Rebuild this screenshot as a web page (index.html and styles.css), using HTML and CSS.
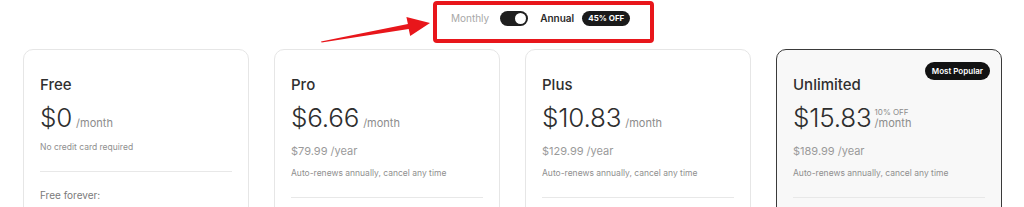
FILE: index.html
```html
<!DOCTYPE html>
<html lang="en">
<head>
<meta charset="utf-8">
<link rel="stylesheet" href="styles.css">
</head>
<body>
<div class="page">
  <header class="billing">
    <div class="toggle-box">
      <span class="opt opt-off">Monthly</span>
      <span class="switch"><span class="knob"></span></span>
      <span class="opt opt-on">Annual</span>
      <span class="save">45% OFF</span>
    </div>
  </header>
  <svg class="arrow" width="130" height="45" viewBox="0 0 130 45" aria-hidden="true">
    <polygon points="11,36.5 97.9,18.9 96.4,12 120,18 100.2,31 98.7,23.9 11.6,37.5" fill="#e8161b"/>
  </svg>

  <section class="plans">
    <article class="card">
      <h3 class="name">Free</h3>
      <div class="price"><span class="amount">$0</span><span class="per">/month</span></div>
      <p class="note note-first">No credit card required</p>
      <hr class="rule">
      <p class="feat-head">Free forever:</p>
    </article>

    <article class="card">
      <h3 class="name">Pro</h3>
      <div class="price"><span class="amount">$6.66</span><span class="per">/month</span></div>
      <p class="yearly">$79.99 /year</p>
      <p class="note">Auto-renews annually, cancel any time</p>
      <hr class="rule">
    </article>

    <article class="card">
      <h3 class="name">Plus</h3>
      <div class="price"><span class="amount">$10.83</span><span class="per">/month</span></div>
      <p class="yearly">$129.99 /year</p>
      <p class="note">Auto-renews annually, cancel any time</p>
      <hr class="rule">
    </article>

    <article class="card card-featured">
      <span class="popular">Most Popular</span>
      <h3 class="name">Unlimited</h3>
      <div class="price"><span class="amount">$15.83</span><span class="per-stack"><span class="off">10% OFF</span><span class="per per-low">/month</span></span></div>
      <p class="yearly">$189.99 /year</p>
      <p class="note">Auto-renews annually, cancel any time</p>
      <hr class="rule">
    </article>
  </section>
</div>
</body>
</html>
```

FILE: styles.css
```css
* { box-sizing: border-box; }

html, body {
  margin: 0;
  padding: 0;
  background: #ffffff;
}

body {
  font-family: Inter, "Noto Sans", "Liberation Sans", sans-serif;
  color: #333333;
  overflow: hidden;
}

.page {
  position: relative;
  width: 1024px;
  height: 207px;
  overflow: hidden;
}

.billing {
  display: flex;
  padding: 1px 0 0 433px;
  height: 49px;
}

.toggle-box {
  display: flex;
  align-items: center;
  width: 221px;
  height: 42px;
  border: 4px solid #e8161b;
  border-radius: 4px;
  padding: 0 0 8px 14px;
}

.opt {
  font-size: 10px;
  line-height: 14px;
}

.opt-off {
  color: #a8a8a8;
}

.opt-on {
  color: #2a2a2a;
  font-weight: 600;
  margin-left: 12px;
}

.switch {
  display: flex;
  align-items: center;
  justify-content: flex-end;
  width: 28px;
  height: 15px;
  margin-left: 11px;
  padding: 0 2px;
  border-radius: 8px;
  background: #1f1f1f;
}

.knob {
  width: 11px;
  height: 11px;
  border-radius: 50%;
  background: #ffffff;
}

.save {
  margin-left: 8px;
  height: 15px;
  padding: 0 6px;
  border-radius: 8px;
  background: #1a1a1a;
  color: #ffffff;
  font-size: 8px;
  font-weight: 700;
  line-height: 15px;
}

.arrow {
  position: absolute;
  left: 310px;
  top: 5px;
}

.plans {
  display: grid;
  grid-template-columns: repeat(4, 226px);
  column-gap: 25px;
  padding: 0 22px 0 23px;
}

.card {
  position: relative;
  height: 200px;
  border: 1px solid #e6e6e6;
  border-radius: 10px;
  padding: 25px 16px 0;
  background: #ffffff;
}

.card-featured {
  border-color: #3a3a3a;
  background: #f8f8f8;
}

.name {
  margin: 0;
  font-size: 15px;
  line-height: 20px;
  font-weight: 500;
  color: #2f2f2f;
}

.price {
  margin-top: 8px;
  height: 30px;
  line-height: 30px;
  white-space: nowrap;
}

.amount {
  font-size: 26px;
  line-height: 30px;
  font-weight: 300;
  color: #2e2e2e;
  letter-spacing: -0.2px;
}

.per {
  margin-left: 4px;
  font-size: 11px;
  line-height: 12px;
  color: #8c8c8c;
}

.per-stack {
  display: inline-block;
  vertical-align: baseline;
  margin-left: 3px;
  line-height: 12px;
}

.off,
.per-low {
  display: block;
  margin-left: 0;
}

.off {
  font-size: 8px;
  line-height: 10px;
  color: #8c8c8c;
}

.yearly {
  margin: 10px 0 0;
  font-size: 11px;
  line-height: 16px;
  color: #9a9a9a;
}

.note {
  margin: 8px 0 0;
  font-size: 8.5px;
  line-height: 12px;
  color: #8f8f8f;
}

.rule {
  margin: 18px 0 0;
  border: 0;
  border-top: 1px solid #e8e8e8;
  height: 0;
}

.feat-head {
  margin: 16px 0 0;
  font-size: 10px;
  line-height: 14px;
  color: #7a7a7a;
}

.popular {
  position: absolute;
  top: 12px;
  right: 11px;
  height: 18px;
  padding: 0 7px;
  border-radius: 9px;
  background: #121212;
  color: #ffffff;
  font-size: 8px;
  font-weight: 600;
  line-height: 18px;
}
```
